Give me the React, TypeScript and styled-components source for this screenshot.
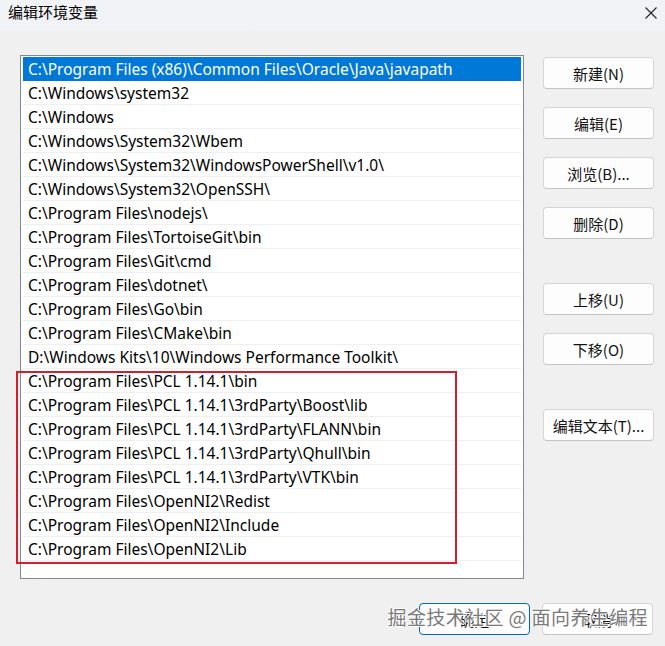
import React from 'react'
import styled, { createGlobalStyle } from 'styled-components'

const paths = [
  'C:\\Program Files (x86)\\Common Files\\Oracle\\Java\\javapath',
  'C:\\Windows\\system32',
  'C:\\Windows',
  'C:\\Windows\\System32\\Wbem',
  'C:\\Windows\\System32\\WindowsPowerShell\\v1.0\\',
  'C:\\Windows\\System32\\OpenSSH\\',
  'C:\\Program Files\\nodejs\\',
  'C:\\Program Files\\TortoiseGit\\bin',
  'C:\\Program Files\\Git\\cmd',
  'C:\\Program Files\\dotnet\\',
  'C:\\Program Files\\Go\\bin',
  'C:\\Program Files\\CMake\\bin',
  'D:\\Windows Kits\\10\\Windows Performance Toolkit\\',
  'C:\\Program Files\\PCL 1.14.1\\bin',
  'C:\\Program Files\\PCL 1.14.1\\3rdParty\\Boost\\lib',
  'C:\\Program Files\\PCL 1.14.1\\3rdParty\\FLANN\\bin',
  'C:\\Program Files\\PCL 1.14.1\\3rdParty\\Qhull\\bin',
  'C:\\Program Files\\PCL 1.14.1\\3rdParty\\VTK\\bin',
  'C:\\Program Files\\OpenNI2\\Redist',
  'C:\\Program Files\\OpenNI2\\Include',
  'C:\\Program Files\\OpenNI2\\Lib',
]

const sideButtons = [
  { label: '新建(N)', gap: 0 },
  { label: '编辑(E)', gap: 18 },
  { label: '浏览(B)...', gap: 18 },
  { label: '删除(D)', gap: 18 },
  { label: '上移(U)', gap: 44 },
  { label: '下移(O)', gap: 18 },
  { label: '编辑文本(T)...', gap: 44 },
]

const GlobalStyle = createGlobalStyle`
  html, body {
    margin: 0;
    padding: 0;
    background: #f0f0f0;
  }
  body {
    font-family: "Noto Sans", "Noto Sans CJK SC", sans-serif;
    color: #000;
  }
`

const App = () => (
  <Window>
    <GlobalStyle />
    <TitleBar>
      <Title>编辑环境变量</Title>
      <CloseIcon viewBox="0 0 12 12">
        <path d="M0.5 0.5L11.5 11.5M11.5 0.5L0.5 11.5" />
      </CloseIcon>
    </TitleBar>
    <Body>
      <ListBox>
        {paths.map((p, i) => (
          <Row key={i} selected={i === 0}>
            {p}
          </Row>
        ))}
        <Highlight />
      </ListBox>
      <SideColumn>
        {sideButtons.map(b => (
          <Button key={b.label} style={{ marginTop: b.gap }}>
            {b.label}
          </Button>
        ))}
      </SideColumn>
    </Body>
    <Footer>
      <Button primary>确定</Button>
      <Button>取消</Button>
      <Watermark>掘金技术社区 @ 面向养生编程</Watermark>
    </Footer>
  </Window>
)

export default App

const Window = styled.div`
  width: 665px;
  height: 646px;
  display: flex;
  flex-direction: column;
  background: #f0f0f0;
  overflow: hidden;
`

const TitleBar = styled.div`
  height: 31px;
  display: flex;
  align-items: flex-start;
  justify-content: space-between;
  padding: 0 8px 0 8px;
  background: linear-gradient(#f2f3f7, #f1f2f5);
`

const Title = styled.div`
  font-family: "Noto Sans CJK SC", sans-serif;
  font-size: 15px;
  line-height: 15px;
  margin-top: 4px;
`

const CloseIcon = styled.svg`
  width: 12px;
  height: 12px;
  margin-top: 7px;
  fill: none;
  stroke: #222;
  stroke-width: 1.1;
`

const Body = styled.div`
  display: flex;
  align-items: flex-start;
  padding: 24px 0 0 20px;
  gap: 19px;
`

const ListBox = styled.div`
  position: relative;
  width: 498px;
  height: 520px;
  border: 1px solid #828790;
  background: #fff;
  padding: 1px 2px;
  box-sizing: content-box;
  display: flex;
  flex-direction: column;
`

const Row = styled.div<{ selected?: boolean }>`
  height: 23px;
  flex: none;
  line-height: 24px;
  padding-left: 5px;
  font-size: 15.5px;
  white-space: nowrap;
  color: ${p => (p.selected ? '#fff' : '#000')};
  background: ${p => (p.selected ? '#0078d7' : '#fff')};
  border-bottom: 1px solid ${p => (p.selected ? '#0078d7' : '#f0f0f0')};
`

const Highlight = styled.div`
  position: absolute;
  left: -5px;
  top: 315px;
  width: 437px;
  height: 189px;
  border: 2px solid #d3202e;
  pointer-events: none;
`

const SideColumn = styled.div`
  display: flex;
  flex-direction: column;
  padding-top: 2px;
`

const Button = styled.button<{ primary?: boolean }>`
  width: 111px;
  height: 32px;
  box-sizing: border-box;
  border-radius: 4px;
  border: 1px solid ${p => (p.primary ? '#0067c0' : '#d5d5d5')};
  border-bottom-color: ${p => (p.primary ? '#0067c0' : '#c4c4c4')};
  background: #fdfdfd;
  font-family: "Noto Sans CJK SC", sans-serif;
  font-size: 15px;
  color: #111;
  padding: 0;
`

const Footer = styled.div`
  position: relative;
  display: flex;
  justify-content: flex-end;
  gap: 12px;
  padding: 24px 12px 0 0;
`

const Watermark = styled.div`
  position: absolute;
  right: 17px;
  top: 26px;
  font-family: "Noto Sans CJK SC", sans-serif;
  font-size: 19px;
  letter-spacing: 0.4px;
  line-height: 24px;
  color: #7a7a7a;
  white-space: nowrap;
  text-shadow: 1px 0 #fff, -1px 0 #fff, 0 1px #fff, 0 -1px #fff;
  pointer-events: none;
`
